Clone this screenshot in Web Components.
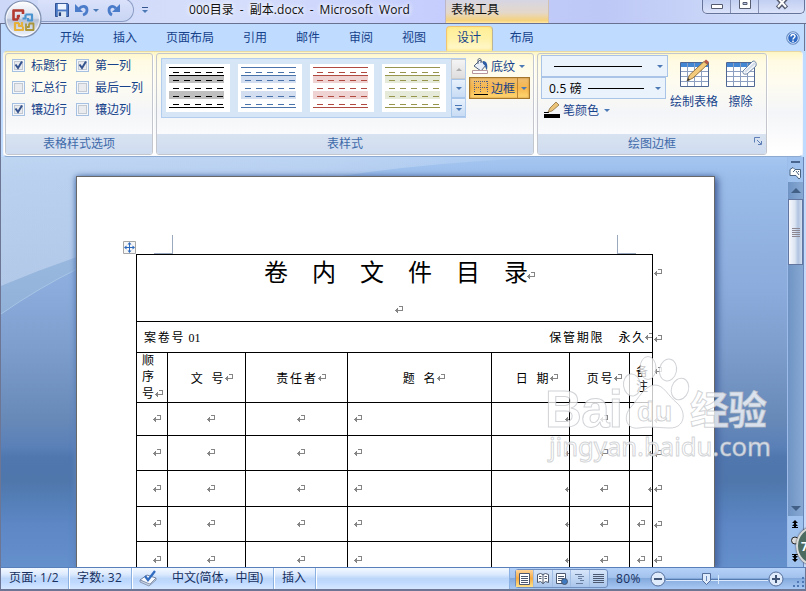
<!DOCTYPE html>
<html lang="zh-CN">
<head>
<meta charset="utf-8">
<title>000目录 - 副本.docx - Microsoft Word</title>
<style>
  html, body { margin: 0; height: 100%; overflow: hidden; }
  body { font: 12px "Open Sans", "Noto Sans CJK SC", sans-serif; color: #15428b; }
</style>
</head>
<body>
<word-window></word-window>

<script>
const define = (name, html, setup) => {
  const template = document.createElement('template');
  template.innerHTML = html;
  customElements.define(name, class extends HTMLElement {
    constructor() {
      super();
      this.attachShadow({ mode: 'open' });
      this.shadowRoot.appendChild(template.content.cloneNode(true));
    }
    connectedCallback() {
      if (setup) setup(this, this.shadowRoot);
    }
  });
};

// small down arrow used by every drop-down
define('drop-arrow', `
  <style>
  :host { display: block; width: 0; height: 0; flex: none; border: 3px solid transparent; border-top-color: #4b79b5; border-bottom: 0; }
  </style>
`);

// paragraph mark
define('return-mark', `
  <style>
  :host { display: inline-block; width: 8px; height: 8px; flex: none; overflow: hidden; white-space: normal; }
  svg { display: block; }
  </style>
  <svg width="8" height="8" viewBox="0 0 8 8" fill="#858585" shape-rendering="crispEdges">
    <path d="M4 0h4v1H4zM7 1h1v4H7zM3 4h4v1H3zM0 4h1v1H0zM1 3h1v3H1zM2 2h1v5H2z"/>
  </svg>
`);

define('office-button', `
  <style>
  :host { display: block; width: 38px; height: 38px; }
  svg { display: block; }
  </style>
  <svg width="38" height="38" viewBox="0 0 38 38">
    <defs>
      <linearGradient id="g" x1="0" y1="0" x2="0" y2="1">
        <stop offset="0" stop-color="#fff"/><stop offset=".48" stop-color="#d5dceb"/>
        <stop offset=".52" stop-color="#b4bfd6"/><stop offset="1" stop-color="#f4f8ff"/>
      </linearGradient>
    </defs>
    <circle cx="19" cy="19" r="18" fill="url(#g)" stroke="#7f8fae" stroke-width="1.200"/>
    <circle cx="19" cy="19" r="16.500" fill="none" stroke="#fff" stroke-opacity=".7"/>
    <g fill="none" stroke-linejoin="round">
      <path stroke="#b23a30" stroke-width="2.600" d="M14 19.500H9.500V10.500H19V14M14 19.500V16h2"/>
      <path stroke="#4a94d0" stroke-width="2.200" d="M21.500 14.500h6.500v6h-4v-2.500M21.500 14.500v4h-3"/>
      <path stroke="#e6b13a" stroke-width="2.200" d="M15 23h-4v7h8v-3.500M15 23v3h3v-4"/>
      <path stroke="#a9963a" stroke-width="1.800" d="M25 23.500h4.500V30H22v-6.500M25 23.500V27h-2"/>
    </g>
  </svg>
`);

define('quick-access', `
  <style>
  :host { display: flex; align-items: center; box-sizing: border-box; width: 96px; height: 24px; margin: -2px 0 0 38px; padding: 0 0 0 16px; border: 1px solid #8b9cc4; border-left-color: transparent; border-radius: 0 13px 13px 0; background: linear-gradient(#dbe2fb, #c8d5f3); }
  svg { display: block; flex: none; }
  </style>
  <svg width="14" height="14" viewBox="0 0 15 15"><path d="M.5.5h13l1 1v13H.5z" fill="#4a78c4" stroke="#27488c"/><path d="M3 1h9v6H3z" fill="#eef4ff"/><path d="M3 9h9v6H3z" fill="#dbe5f4"/><path d="M4 10h2.500v4H4z" fill="#24427e"/></svg>
  <svg style="margin-left:6px" width="15" height="14" viewBox="0 0 15 14" fill="none"><path d="M4 6c3-4 8-3 8 1 0 2-1 4-4 5" stroke="#4a7cc9" stroke-width="2.800"/><path d="M0 1v8h8z" fill="#4a7cc9"/></svg>
  <drop-arrow style="margin-left:3px"></drop-arrow>
  <svg style="margin-left:8px" width="15" height="14" viewBox="0 0 15 14" fill="none"><path d="M9 5.500C6 1.500 2 4 2 7c0 2 1 4 3 5" stroke="#4a7cc9" stroke-width="2.800"/><path d="M13 1v8H5z" fill="#4a7cc9"/></svg>
`);

define('caption-buttons', `
  <style>
  :host { display: flex; box-sizing: border-box; width: 103px; height: 14px; border: 1px solid #66749a; border-top: 0; border-radius: 0 0 5px 5px; background: linear-gradient(#c2cff2, #dbe3fa); box-shadow: 0 0 1px #fff; }
  i { display: flex; justify-content: center; width: 27px; border-right: 1px solid #8491b5; }
  i:last-child { flex: 1; border: 0; }
  svg { display: block; width: 14px; height: 12px; }
  </style>
  <i><svg viewBox="0 0 14 12"><path d="M1.500 4.500h11v4h-11z" fill="#fff" stroke="#555c70"/></svg></i>
  <i><svg viewBox="0 0 14 12"><path d="M1.500-2h11V8.500h-11z" fill="#fff" stroke="#555c70"/><path d="M5 2.500h4v2H5z" fill="#bcc9ed" stroke="#555c70"/></svg></i>
  <i><svg viewBox="0 0 14 12"><path d="M2.500-2L11.500 8M11.500-2L2.500 8" stroke="#555c70" stroke-width="4.400"/><path d="M3-2L11 7M11-2L3 7" stroke="#fff" stroke-width="2"/></svg></i>
`);

define('title-bar', `
  <style>
  :host { position: relative; display: flex; align-items: flex-start; height: 24px; background: linear-gradient(90deg, #cdd8f8, #d6dffb 28%, #c4cdfd 55%, #bec8f6 75%, #d3e0fa); border-bottom: 1px solid #687190; box-sizing: border-box; color: #111; }
  office-button { position: absolute; left: 4px; top: 0; z-index: 2; }
  .more { margin: 7px 0 0 8px; width: 6px; border-top: 1px solid #35558f; padding-top: 2px; }
  .title { margin-left: 41px; width: 256px; line-height: 19px; white-space: nowrap; letter-spacing: .070px; word-spacing: 2.700px; text-shadow: 0 0 5px #fff, 0 0 5px #fff; }
  .context { box-sizing: border-box; width: 104px; height: 23px; padding-left: 5px; line-height: 19px; border-left: 1px solid #bdb6c5; border-right: 1px solid #d2c1ae; background: linear-gradient(#d6d5e4, #e4d8c9 55%, #f7d27b 90%, #ffe9a8); }
  caption-buttons { margin-left: 153px; }
  </style>
  <office-button></office-button>
  <quick-access></quick-access>
  <div class="more"><drop-arrow style="width:0"></drop-arrow></div>
  <div class="title">000目录 - 副本.docx - Microsoft Word</div>
  <div class="context">表格工具</div>
  <caption-buttons></caption-buttons>
`);

define('ribbon-tab', `
  <style>
  :host { display: block; box-sizing: border-box; height: 25px; padding: 0 14.500px; line-height: 23px; }
  :host([active]) { margin: 0 2px 0 5px; padding: 0 11px 0 10.500px; border: 1px solid #e2bb6d; border-color: #f1c474 #b9b39c transparent #f1c474; border-radius: 4px 4px 0 0; background: linear-gradient(#ffee96, #fff2a8 50%, #fff8cf); box-shadow: inset 0 0 3px #ffe266; line-height: 22px; }
  </style>
  <slot></slot>
`);

define('tab-strip', `
  <style>
  :host { display: flex; align-items: flex-end; height: 27px; padding-left: 44.500px; box-sizing: border-box; background: #bfdbff; }
  svg { display: block; margin: 0 4px 6px auto; }
  </style>
  <ribbon-tab>开始</ribbon-tab><ribbon-tab>插入</ribbon-tab><ribbon-tab>页面布局</ribbon-tab><ribbon-tab>引用</ribbon-tab><ribbon-tab>邮件</ribbon-tab><ribbon-tab>审阅</ribbon-tab><ribbon-tab>视图</ribbon-tab><ribbon-tab active>设计</ribbon-tab><ribbon-tab>布局</ribbon-tab>
  <svg width="14" height="14" viewBox="0 0 14 14"><circle cx="7" cy="7" r="6.300" fill="#2f6bc4" stroke="#7d98c4"/><circle cx="7" cy="7" r="5.300" fill="none" stroke="#dbe8fb"/><path d="M5 5.500C5 3 9 3 9 5.300 9 6.800 7 6.800 7 8.600M7 9.500V11" fill="none" stroke="#fff" stroke-width="1.500"/></svg>
`);

define('ribbon-group', `
  <style>
  :host { display: flex; flex-direction: column; box-sizing: border-box; height: 102px; border: 1px solid #c3c7cd; border-radius: 3px; box-shadow: 1px 1px 0 #fff; overflow: hidden; }
  .body { flex: 1; min-height: 0; }
  .label { position: relative; height: 20px; line-height: 19px; text-align: center; background: linear-gradient(#d8e2f0, #cfdcf0); color: #3e6aaa; }
  svg { position: absolute; right: 4px; top: 3px; display: none; }
  :host([launcher]) svg { display: block; }
  </style>
  <div class="body"><slot></slot></div>
  <div class="label"><span></span><svg width="8" height="8" viewBox="0 0 8 8" fill="none" stroke="#5d7fb5"><path d="M.5 5.500v-5H6M3 3l4 4M7.500 4v3.500H4"/></svg></div>
`, (el, root) => {
  root.querySelector('span').textContent = el.getAttribute('label');
});

define('check-option', `
  <style>
  :host { display: flex; align-items: center; gap: 6px; height: 22px; white-space: nowrap; }
  svg { display: block; flex: none; }
  path { display: none; }
  :host([checked]) path { display: block; }
  </style>
  <svg width="13" height="13" viewBox="0 0 13 13"><rect x=".5" y=".5" width="12" height="12" fill="#f3f6fb" stroke="#a6c0e2"/><rect x="2.500" y="2.500" width="8" height="8" fill="#e9ebee" stroke="#c3c9d1"/><path d="M3.500 5.500L6 9l4-6.500" fill="none" stroke="#35538f" stroke-width="2"/></svg>
  <slot></slot>
`);

define('style-thumb', `
  <style>
  :host { display: block; width: 64px; height: 48px; background: #fff; }
  svg { display: block; }
  </style>
  <svg width="64" height="48" fill="none" shape-rendering="crispEdges">
    <path class="band" d="M3 12h55v7H3zM3 27h55v8H3z"/>
    <path class="line" d="M3 3.500h55M3 11.500h55M3 43.500h55"/>
    <path class="line" stroke-dasharray="6 5" d="M7 8.500h51M7 16.500h51M7 24.500h51M7 32.500h51M7 40.500h51"/>
  </svg>
`, (el, root) => {
  root.querySelector('.band').setAttribute('fill', el.getAttribute('band'));
  root.querySelectorAll('.line').forEach(p => p.setAttribute('stroke', el.getAttribute('line')));
});

define('style-gallery', `
  <style>
  :host { display: flex; box-sizing: border-box; width: 305px; height: 60px; border: 1px solid #b3cdee; background: #d6e6f7; }
  .items { display: flex; gap: 8px; padding: 5px 0 0 4px; width: 285px; }
  .scroll { display: grid; grid-template-rows: 20px 19px 19px; width: 14px; }
  .scroll div { display: grid; place-content: center; justify-items: center; border: 1px solid #a8c5ea; border-right: 0; background: linear-gradient(#e8f1fc, #c8dcf4); }
  .scroll div:first-child { background: linear-gradient(#f4f4f4, #dedede); border-color: #ccc; }
  .up { transform: rotate(180deg); filter: grayscale(1) opacity(.5); }
  hr { width: 7px; margin: 0 0 2px; border: 0; border-top: 1px solid #4b79b5; }
  </style>
  <div class="items">
    <style-thumb line="#000000" band="#bfbfbf"></style-thumb>
    <style-thumb line="#4a73aa" band="#d3dff0"></style-thumb>
    <style-thumb line="#b0493f" band="#efd3d2"></style-thumb>
    <style-thumb line="#97944e" band="#e6ead8"></style-thumb>
  </div>
  <div class="scroll"><div><drop-arrow class="up"></drop-arrow></div><div><drop-arrow></drop-arrow></div><div><hr><drop-arrow></drop-arrow></div></div>
`);

define('line-combo', `
  <style>
  :host { display: flex; align-items: center; box-sizing: border-box; height: 22px; border: 1px solid #aac4e8; background: #eaf2fb; color: #000; padding: 0 4px 0 7px; letter-spacing: .2px; }
  .rule { height: 1px; background: #000; }
  drop-arrow { margin-left: auto; }
  </style>
  <slot></slot><div class="rule"></div><drop-arrow></drop-arrow>
`, (el, root) => {
  const rule = root.querySelector('.rule');
  rule.style.width = el.getAttribute('rule') + 'px';
  rule.style.marginLeft = el.getAttribute('indent') + 'px';
});

define('big-button', `
  <style>
  :host { display: flex; flex-direction: column; align-items: center; white-space: nowrap; line-height: 17px; gap: 4px; }
  </style>
  <slot name="icon"></slot><slot></slot>
`);

define('word-ribbon', `
  <style>
  :host { display: block; height: 106px; padding: 0 3px 0 3px; background: #bfdbff; }
  .panel { display: flex; gap: 3px; box-sizing: border-box; height: 106px; padding: 1px; border: 1px solid #c1bfae; border-color: #e6d9a4 #f2f4f8 #8daad2; border-radius: 4px; background: linear-gradient(#fff6c4, #fffbe3 9px, #fefcf0 30px, #f4f5f8 60px, #fff 100px); }
  .checks { display: grid; grid-template-columns: 64px 1fr; padding: 0 0 0 6px; }
  .styles { display: flex; gap: 3px; padding: 4px 0 0 4px; }
  .row { display: flex; align-items: center; box-sizing: border-box; height: 22px; white-space: nowrap; }
  .pressed { width: 61px; padding-left: 4px; border: 1px solid #a4762b; background: linear-gradient(#eebf72, #f6b64c 50%, #ffd772); box-shadow: inset 0 0 2px #b7792c; }
  .split { display: grid; place-content: center; height: 100%; margin-left: 2px; padding: 0 2px 0 3px; border-left: 1px solid #be8436; flex: 1; }
  .draw { display: flex; padding: 1px 0 0 3px; }
  .pens { width: 127px; }
  svg { display: block; flex: none; }
  </style>
  <div class="panel">
    <ribbon-group label="表格样式选项" style="width:148px">
      <div class="checks">
        <check-option checked>标题行</check-option><check-option checked>第一列</check-option>
        <check-option>汇总行</check-option><check-option>最后一列</check-option>
        <check-option checked>镶边行</check-option><check-option>镶边列</check-option>
      </div>
    </ribbon-group>
    <ribbon-group label="表样式" style="width:378px">
      <div class="styles">
        <style-gallery></style-gallery>
        <div>
          <div class="row" style="margin-top:-3px;padding-left:3px">
            <svg width="17" height="17" viewBox="0 0 17 17"><path d="M2 8l6-6 6 5-5 6z" fill="#e9f0fa" stroke="#50617e"/><path d="M6 6V2c0-2 3-2 3 0v3" fill="none" stroke="#50617e"/><path d="M11 3c4 0 5 4 4 9-2-1-1-5-4-6z" fill="#2e5ea5"/><path d="M.5 12.500h15v3H.5z" fill="#fff" stroke="#b8969e"/></svg>
            <span style="margin:0 4px 0 2px">底纹</span><drop-arrow></drop-arrow>
          </div>
          <div class="row pressed">
            <svg width="14" height="14" viewBox="0 0 14 14" fill="none" shape-rendering="crispEdges"><path d="M0 .5h14M0 6.500h14M.5 0v12M6.500 0v12M13.500 0v12" stroke="#4e5d86" stroke-dasharray="1 1"/><path d="M0 13.500h14" stroke="#000"/></svg>
            <span style="margin-left:3px">边框</span><span class="split"><drop-arrow></drop-arrow></span>
          </div>
        </div>
      </div>
    </ribbon-group>
    <ribbon-group label="绘图边框" launcher style="width:230px">
      <div class="draw">
        <div class="pens">
          <line-combo rule="88" indent="5" style="width:127px"></line-combo>
          <line-combo rule="56" indent="6" style="width:125px">0.5 磅</line-combo>
          <div class="row" style="padding-left:3px">
            <svg width="16" height="17" viewBox="0 0 16 17"><path d="M0 10.500h5" stroke="#000"/><path d="M4 10l2-4 6-6 3 3-7 6z" fill="#ecc478" stroke="#8c7144" stroke-width=".8"/><path d="M0 12h16v4H0z"/></svg>
            <span style="margin:0 5px 0 3px">笔颜色</span><drop-arrow></drop-arrow>
          </div>
        </div>
        <big-button style="margin:4px 0 0 2px;width:48px">
          <svg slot="icon" width="31" height="30" viewBox="0 0 31 30"><path d="M1.500 3.500h28v24h-28z" fill="#fff" stroke="#4f6792"/><path d="M2 4h27v4H2z" fill="#4386d3"/><path d="M8.500 4v23M15.500 4v23M22.500 4v23M2 12.500h27M2 17.500h27M2 22.500h27" stroke="#8d9fc0"/><path d="M8 22l2.500-6L25 2.500l3.500 3L14 19z" fill="#f3c97c" stroke="#8b6a34" stroke-width=".9"/><path d="M25 2.500l2-2 3 2.500-1.500 2.500z" fill="#b85947"/><path d="M8 22l1-3 2 2z" fill="#333"/></svg>
          绘制表格
        </big-button>
        <big-button style="margin:4px 0 0 7px;width:31px">
          <svg slot="icon" width="32" height="30" viewBox="0 0 32 30"><path d="M1.500 3.500h28v24h-28z" fill="#fff" stroke="#4f6792"/><path d="M2 4h27v4H2z" fill="#4386d3"/><path d="M8.500 4v23M15.500 4v23M22.500 4v23M2 12.500h27M2 17.500h27M2 22.500h27" stroke="#8d9fc0"/><path d="M18 12L28 2q4 0 3 5L22 15q-5 1-4-3z" fill="#f7f9fc" stroke="#6e84a5"/><path d="M20 13L30 4" stroke="#d3dcea" stroke-width="2"/></svg>
          擦除
        </big-button>
      </div>
    </ribbon-group>
  </div>
`);

define('record-table', `
  <style>
  :host { display: grid; grid-template-columns: 517px 12px; color: #000; }
  .grid { display: grid; grid-template-columns: 30px 77px 101px 143px 77px 59px 22px; grid-template-rows: 66px 30px 49px 32px 34px 35px 34px 35px; gap: 1px; padding: 1px; background: #000; width: 515px; }
  .grid > div { display: flex; align-items: center; justify-content: center; box-sizing: border-box; background: #fff; overflow: hidden; white-space: pre; letter-spacing: 1.800px; word-spacing: -1.500px; }
  .grid > .wide { grid-column: 1 / -1; }
  .title { position: relative; }
  .title > span { position: absolute; left: 127px; top: 0; font-size: 24px; line-height: 33px; letter-spacing: 24px; margin-right: -24px; }
  .title > return-mark { position: absolute; left: 390px; top: 17px; }
  .title > .second { left: 258px; top: 51px; }
  .grid > .info { padding: 0 0 0 7px; }
  .info span:first-child { flex: 1; }
  .info b { font: 400 12px "Liberation Serif", serif; letter-spacing: 0; word-spacing: 0; }
  .seq { line-height: 16.300px; padding-left: 1px; }
  .grid > .note { flex-direction: column; line-height: 15px; padding: 2px 0 0 4px; }
  .grid > .mark { padding-left: 9px; }
  .grid > .last { padding: 0; }
  .grid > .left { justify-content: flex-start; padding-left: 6px; }
  .grid > .clip { justify-content: flex-end; padding: 0; }
  .clip return-mark { width: 4px; }
  .gutter { display: grid; grid-template-rows: 67px 31px 50px 33px 35px 36px 35px 35px; padding: 1px 0 0 1px; align-items: center; }
  </style>
  <div class="grid">
    <div class="wide title"><span>卷内文件目录</span><return-mark></return-mark><return-mark class="second"></return-mark></div>
    <div class="wide info"><span>案卷号<b> 01</b></span><span>保管期限</span><span style="margin-left:14px">永久</span><return-mark style="width:7px;margin-left:-1px"></return-mark></div>
    <div class="seq"><span>顺<br>序<br>号</span><return-mark style="margin:32px 0 0 -1px"></return-mark></div>
    <div style="padding-left:11px">文  号<return-mark></return-mark></div>
    <div style="padding-left:9px">责任者<return-mark></return-mark></div>
    <div style="padding-left:9px">题  名<return-mark></return-mark></div>
    <div style="padding-left:13px">日  期<return-mark></return-mark></div>
    <div style="padding-left:10px">页号<return-mark></return-mark></div>
    <div class="note"><span>备</span><span>注</span></div>
  </div>
  <div class="gutter"></div>
`, (el, root) => {
  const grid = root.querySelector('.grid');
  for (let row = 0; row < 5; row++) {
    for (let col = 0; col < 7; col++) {
      const cell = document.createElement('div');
      cell.className = col === 3 ? 'left' : 'mark';
      if (col === 4 || (col === 6 && row < 3)) cell.className = 'clip';
      if (col === 6 && row > 2) cell.className = 'last';
      cell.appendChild(document.createElement('return-mark'));
      grid.appendChild(cell);
    }
  }
  const gutter = root.querySelector('.gutter');
  for (let row = 0; row < 8; row++) {
    const mark = document.createElement('return-mark');
    mark.style.marginTop = ['-32px', '2px', '-14px'][row] || '0';
    gutter.appendChild(mark);
  }
});

define('word-page', `
  <style>
  :host { display: block; box-sizing: border-box; width: 639px; height: 391px; margin: 19px 0 0 75px; border: 1px solid #686868; border-bottom: 0; background: #fff; box-shadow: 3px 2px 7px #46629b, -1px 0 5px #668bc0; }
  .top { display: flex; align-items: flex-end; height: 77px; box-sizing: border-box; padding-left: 46px; }
  i { display: block; box-sizing: border-box; width: 19px; height: 19px; border: 1px solid #9ba9bf; border-width: 0 1px 1px 0; }
  i.right { border-width: 0 0 1px 1px; }
  svg { display: block; }
  record-table { margin-left: 59px; }
  </style>
  <div class="top">
    <svg width="13" height="13" viewBox="0 0 13 13"><path d="M.5.5h12v12H.5z" fill="#f6f6f6" stroke="#a7a7a7"/><path d="M6.500 3v7M3 6.500h7" stroke="#2c69bd"/><path d="M6.500 1l2 2.500h-4zM6.500 12l2-2.500h-4zM1 6.500l2.500-2v4zM12 6.500l-2.500-2v4z" fill="#2c69bd"/></svg>
    <i style="margin-left:18px"></i><i class="right" style="margin-left:444px"></i>
  </div>
  <record-table></record-table>
`);

define('scroll-rail', `
  <style>
  :host { display: flex; flex-direction: column; width: 16px; box-sizing: border-box; background: #9fc1ee; align-items: center; border-left: 1px solid #9dbcea; }
  .split { width: 9px; height: 2px; margin: 4px 0 3px; background: #47658f; flex: none; }
  .track { display: flex; flex: none; flex-direction: column; align-items: center; width: 15px; height: 334px; margin-top: 2px; background: linear-gradient(90deg, #6f94c4, #87a8d2); }
  .arrow { border: 5px solid transparent; border-top: 0; border-bottom: 5px solid #425f86; margin: 6px 0; }
  .down { transform: rotate(180deg); margin: auto 0 5px; }
  .thumb { display: grid; place-content: center; gap: 1px; width: 13px; height: 64px; border: 1px solid #62769f; background: linear-gradient(90deg, #f6f8fc, #dce5f3 45%, #b0c3df 70%, #d4dfef); }
  .thumb b { width: 8px; height: 1px; background: #8d8791; }
  svg { display: block; flex: none; }
  </style>
  <div class="split"></div>
  <svg width="13" height="14" viewBox="0 0 13 14" fill="#fff" stroke="#48627f"><path d="M1 3.500l3-2 2 2h5.500v8L10 13l-3-3.500H1zM4 6l2-2M7 5l3 4M9 5l1 1"/></svg>
  <div class="track"><div class="arrow"></div><div class="thumb"><b></b><b></b><b></b><b></b><b></b></div><div class="arrow down"></div></div>
  <svg style="margin-left:-2px" width="12" height="50" viewBox="0 0 12 50"><path d="M6 4L3 7h2v1h2V7h2zM6 7l-3 3h2v1H3v1h6v-1H7v-1h2zM6 46l3-3H7v-1H5v1H3zM6 43l3-3H7v-1h2v-1H3v1h2v1H3z"/><circle cx="6" cy="24.500" r="3.500" fill="#ddd" stroke="#222"/></svg>
`);

define('site-watermark', `
  <style>
  :host { display: block; pointer-events: none; }
  svg { display: block; overflow: visible; }
  text, ellipse, path { fill: #fff; fill-opacity: .77; stroke: #b9bcc1; stroke-opacity: .65; stroke-width: 1px; }
  .logo { font-family: "Liberation Sans", sans-serif; font-weight: 700; }
  .cjk { font-family: "Noto Sans CJK SC", sans-serif; font-weight: 700; }
  .url { font-family: "Noto Sans", sans-serif; }
  </style>
  <svg width="230" height="110" viewBox="545 355 230 110">
    <ellipse cx="648" cy="368" rx="8" ry="11.500"/><ellipse cx="668" cy="370" rx="8.500" ry="11" transform="rotate(12 668 370)"/>
    <ellipse cx="632" cy="385" rx="8.500" ry="11" transform="rotate(-8 632 385)"/><ellipse cx="680" cy="389" rx="8.500" ry="11" transform="rotate(18 680 389)"/>
    <path d="M655 385c9 0 13 11 22 18 10 9 8 25-7 25-8 0-21-2-31 0-14 2-16-13-8-21 7-8 14-22 24-22z"/>
    <text class="logo" x="545" y="427" font-size="51" textLength="78">Bai</text>
    <text class="logo" x="637" y="421" font-size="28" textLength="35">du</text>
    <text class="cjk" x="690" y="424" font-size="39" textLength="77">经验</text>
    <text class="url" x="549" y="456" font-size="26" textLength="222" lengthAdjust="spacingAndGlyphs">jingyan.baidu.com</text>
  </svg>
`);

define('word-workspace', `
  <style>
  :host { position: relative; display: flex; height: 410px; overflow: hidden; border: solid #6d7694; border-width: 0 0 0 1px; box-sizing: border-box; background: linear-gradient(#a4c6f1, #9bbde9 20px, #8bacdc 130px, #7e9fce 190px, #6789b8 263px, #5a80b8 290px, #5077ae 300px, #5077ac 324px, #537eb6 342px, #5d87c5 367px, #6490cc); }
  .swoosh { position: absolute; left: 0; top: 0; }
  .main { position: relative; display: flex; flex: 1; }
  word-page { flex: none; }
  scroll-rail { margin-left: auto; margin-right: 3px; height: 410px; }
  site-watermark { position: absolute; left: 544px; top: 198px; }
  .badge { position: absolute; right: -28px; top: 369px; box-sizing: border-box; width: 38px; height: 40px; padding-left: 3px; border: 2px solid #d8dada; border-radius: 50%; background: #4d6b60; color: #fff; font: 700 12px/37px "Open Sans", sans-serif; box-shadow: 0 0 2px #333; }
  .edge { position: absolute; right: 0; top: 0; width: 3px; height: 410px; background: linear-gradient(90deg, #6a86b8 1px, #c5dafa 1px); }
  </style>
  <svg class="swoosh" width="800" height="165"><defs><linearGradient id="s"><stop offset="0" stop-color="#d9e5f4" stop-opacity=".5"/><stop offset=".5" stop-color="#d5e2f6" stop-opacity=".5"/><stop offset="1" stop-color="#fff" stop-opacity="0"/></linearGradient></defs><path d="M0 0h560Q240 10 76 100Q38 113 0 129z" fill="url(#s)"/><path d="M0 129Q38 113 76 100V112Q36 132 0 157z" fill="#a9c7dc" fill-opacity=".35"/><path d="M0 157Q36 132 76 112" fill="none" stroke="#b2cdea" stroke-opacity=".7"/></svg>
  <div class="main"><word-page></word-page><scroll-rail></scroll-rail></div>
  <site-watermark></site-watermark>
  <div class="edge"></div>
  <div class="badge">7</div>
`);

define('view-buttons', `
  <style>
  :host { display: flex; box-sizing: border-box; width: 93px; height: 19px; border: 1px solid #708fbf; border-radius: 3px; background: linear-gradient(#d7e6fa, #a9c5eb); }
  i { display: grid; place-content: center; flex: 1; border-right: 1px solid #a1bde4; }
  i:first-of-type { background: linear-gradient(#ffd59a, #f5aa42 50%, #ffe28b); }
  i:last-of-type { border: 0; }
  svg { display: block; }
  </style>
  <i><svg width="11" height="12" fill="#fff" stroke="#4b5870"><path d="M.5.500h10v11h-10zM2 3.500h7M2 5.500h7M2 7.500h7M2 9.500h7"/></svg></i>
  <i><svg width="12" height="12" fill="#fff" stroke="#4b5870"><path d="M.5 1.500l3-1 2.500 1 2.500-1 3 1v8l-3-1-2.500 2-2.500-2-3 1zM6 1v10M2 3.500h2.500M2 5.500h2.500M7.500 3.500H10M7.500 5.500H10"/></svg></i>
  <i><svg width="12" height="12" fill="#fff" stroke="#4b5870"><path d="M.5.500h9v10h-9zM2 3.500h6M2 5.500h6M2 7.500h4"/><circle cx="8.500" cy="8.500" r="3" fill="#3f79c0"/></svg></i>
  <i><svg width="11" height="12" fill="none" stroke="#697d9e"><path d="M1 1.500h7M4 3.500h6M4 5.500h4M6 7.500h4M2 10.500h7"/></svg></i>
  <i><svg width="11" height="12" fill="none" stroke="#4b5870"><path d="M0 1.500h11M0 3.500h11M0 5.500h11M0 7.500h11M0 9.500h11"/></svg></i>
`);

define('status-bar', `
  <style>
  :host { display: flex; box-sizing: border-box; height: 24px; border: solid #6d7694; border-width: 1px 1px 2px; border-top-color: #597fbb; background: linear-gradient(#f2f8ff, #dceafe 30%, #bcd6fa 50%, #c0daff 70%, #d5e7ff); color: #17305f; white-space: nowrap; line-height: 20px; }
  .cell { box-sizing: border-box; padding-left: 8px; border-right: 1px solid #8bb0e2; box-shadow: 1px 0 #fff; height: 21px; }
  .right { display: flex; align-items: center; flex: 1; padding-left: 5px; background: linear-gradient(#b5d1f8, #a2c2ed 45%, #83a9dc 50%, #a8c8f4); }
  svg { display: block; }
  </style>
  <div class="cell" style="width:68px;letter-spacing:.2px">页面: 1/2</div>
  <div class="cell" style="width:63px;letter-spacing:.15px">字数: 32</div>
  <div class="cell" style="width:142px;display:flex"><svg style="margin:2px 14px 0 -1px" width="19" height="17" viewBox="0 0 19 17"><path d="M1 10l7-5 9 3-6 7z" fill="#f7faff" stroke="#72839f"/><path d="M1 10v2l9 4 7-6V8l-6 6z" fill="#c6d1e3" stroke="#72839f" stroke-width=".7"/><path d="M6 6l3 4 7-9" fill="none" stroke="#316cc0" stroke-width="2.300"/></svg>中文(简体，中国)</div>
  <div class="cell" style="width:42px">插入</div>
  <div class="cell" style="width:194px"></div>
  <div class="right">
    <view-buttons></view-buttons>
    <span style="margin-left:8px;width:34px;letter-spacing:.4px">80%</span>
    <svg width="155" height="20" viewBox="0 0 155 20">
      <path d="M16 10.500h102" stroke="#587bad"/><path d="M16 11.500h102M68.500 6v9" stroke="#dbe9fc"/>
      <g fill="#dfebfb" stroke="#536e9b"><circle cx="8" cy="10" r="7"/><circle cx="126" cy="10" r="7"/><path d="M52.500 4.500h8v7l-4 4-4-4z"/></g>
      <path d="M4 10h8M122 10h8M126 6v8" stroke="#405575" stroke-width="2"/><path d="M56.500 7v5" stroke="#6787b8"/>
      <path d="M152 8h2v2h-2zM147 12h2v2h-2zM152 12h2v2h-2zM143 16h2v2h-2zM147 16h2v2h-2zM152 16h2v2h-2z" fill="#5078b4"/>
    </svg>
  </div>
`);

define('word-window', `
  <style>
  :host { display: flex; flex-direction: column; width: 806px; height: 591px; overflow: hidden; background: #bfdbff; }
  title-bar, tab-strip, word-ribbon, word-workspace, status-bar { flex: none; }
  tab-strip { border-left: 1px solid #6d7694; border-right: 1px solid #6d7694; margin-right: 1px; }
  word-ribbon { box-sizing: border-box; border-left: 1px solid #6d7694; padding-left: 2px; }
  </style>
  <title-bar></title-bar>
  <tab-strip></tab-strip>
  <word-ribbon></word-ribbon>
  <word-workspace></word-workspace>
  <status-bar></status-bar>
`);
</script>
</body>
</html>
